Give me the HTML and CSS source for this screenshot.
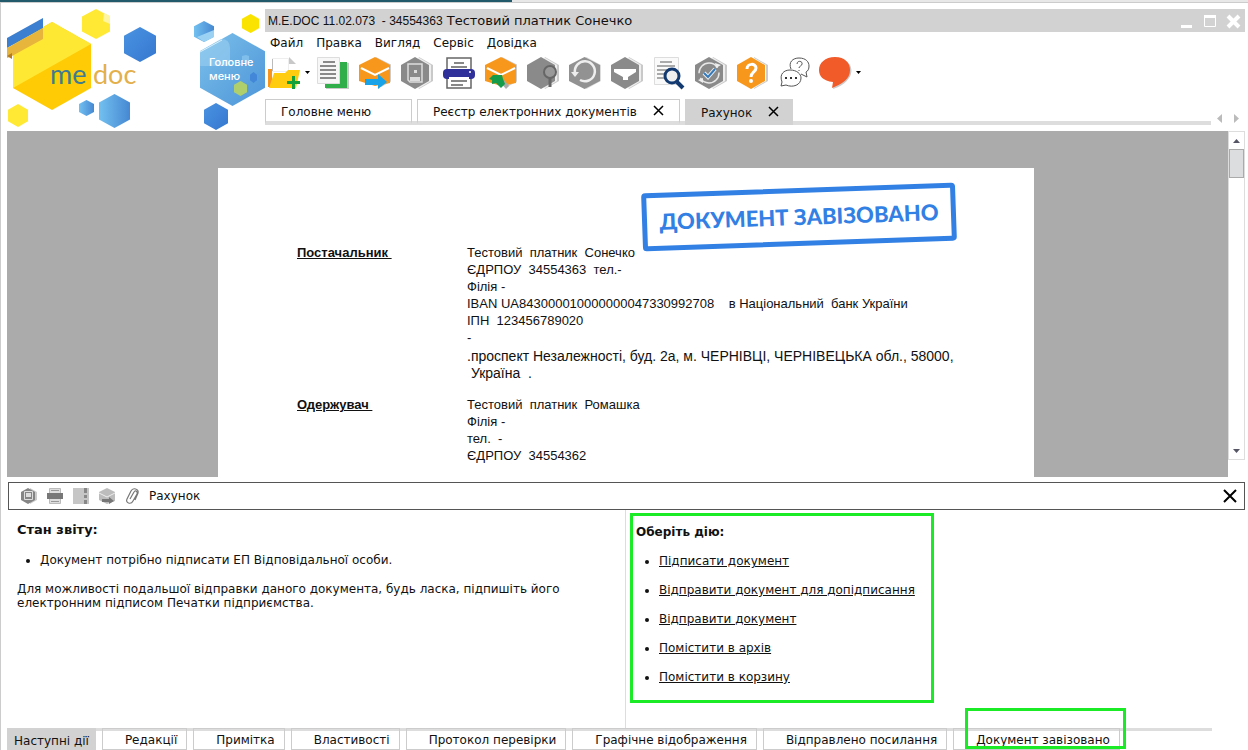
FILE: index.html
```
<!DOCTYPE html>
<html lang="uk">
<head>
<meta charset="utf-8">
<title>M.E.DOC</title>
<link rel="stylesheet" href="styles.css">
</head>
<body>
<svg class="defs" aria-hidden="true">
  <defs>
    <linearGradient id="blue" x1="0" y1="0" x2="1" y2="1"><stop offset="0" stop-color="#4a93e2"/><stop offset="1" stop-color="#3577cf"/></linearGradient>
    <linearGradient id="sky" x1="0" y1="0" x2="1" y2="0"><stop offset="0" stop-color="#72c0f0"/><stop offset="1" stop-color="#4688d2"/></linearGradient>
    <linearGradient id="menu" x1="0" y1="0" x2="1" y2="1"><stop offset="0" stop-color="#7cc0ea"/><stop offset="1" stop-color="#4c95d9"/></linearGradient>
    <symbol id="hex" viewBox="0 0 100 100" preserveAspectRatio="none"><path d="M50 0 100 25V75L50 100 0 75V25z"/></symbol>
    <symbol id="greyhex" viewBox="0 0 32 32"><path fill="#c9c9c9" d="M18 0 32 8V24L18 32z"/><path fill="#eee" d="M17 0 30 8V24L17 32z"/><path fill="#8a8a8a" d="M14 0 28 8V24L14 32 0 24V8z"/></symbol>
    <symbol id="envelope" viewBox="0 0 32 32"><path fill="#ccc" d="M17 0 33 8V24L22 30z"/><path fill="#f7981d" d="M16 0 31 8V26L16 29 0 24V8z"/><path fill="none" stroke="#fff" stroke-width="2" d="m2 11 14 7 14-7"/></symbol>
  </defs>
</svg>
<div class="strip"><i></i></div>
<div class="app">
<header class="header">
  <svg class="brand" viewBox="0 9 265 122" role="img" aria-label="me doc">
    <use href="#hex" x="13" y="22" width="78" height="88" fill="#ffcb05"/>
    <path fill="#ffe833" d="M52 22 91 44 13 88V44z"/>
    <path fill="#3c7fd0" d="m7 38 36-20v10L7 48z"/><path fill="#e7b53b" d="m7 48 36-20v11L12 56 7 58z"/><path fill="#b47b25" d="m7 56 5-3v6z"/>
    <use href="#hex" x="82" y="9" width="28" height="30" fill="#ffe935"/><path fill="#fff4a0" d="m104 13 6 3v8l-7-3z"/>
    <use href="#hex" x="124" y="27" width="32" height="35" fill="url(#blue)"/>
    <use href="#hex" x="79" y="100" width="15" height="16" fill="url(#sky)"/>
    <use href="#hex" x="99" y="94" width="31" height="34" fill="url(#sky)"/>
    <use href="#hex" x="8" y="104" width="20" height="23" fill="#ffe935"/>
    <use href="#hex" x="194" y="21" width="20" height="21" fill="url(#sky)"/><path fill="#9bd2f3" d="m197 37 17-7v7l-10 5z"/>
    <use href="#hex" x="242" y="14" width="17" height="19" fill="#fbe300"/>
    <use href="#hex" x="200" y="33" width="65" height="73" fill="url(#menu)"/>
    <path fill="#96cdef" opacity=".65" d="M200 51 221 39q9 0 9 9v18h-30z"/><path fill="none" stroke="#d9f0fb" d="m200 52 22-12"/>
    <path fill="#80bfec" d="m246 55 3 1v5l-3 2-4-2v-5z"/>
    <use href="#hex" x="250" y="72" width="7" height="11" fill="#4287d8"/>
    <use href="#hex" x="234" y="81" width="13" height="15" fill="#afcf6c"/>
    <use href="#hex" x="204" y="103" width="24" height="27" fill="url(#blue)"/>
    <text class="me" x="50" y="84">me</text><text class="doc" x="93" y="84">doc</text>
    <text class="mm" x="209" y="66">Головне</text><text class="mm" x="209" y="80">меню</text>
  </svg>
  <div class="top">
    <div class="titlebar">
      <h1><span class="latin">M.E.DOC 11.02.073&nbsp; - 34554363</span> Тестовий платник Сонечко</h1>
      <div class="winbtns">
        <button aria-label="Згорнути"><svg width="12" height="16"><path fill="#fff" d="M0 12h11v3H0z"/></svg></button>
        <button aria-label="Розгорнути"><svg width="12" height="14"><path fill="none" stroke="#fff" d="M.5 1.5h11v11H.5z"/><path fill="#fff" d="M0 1h12v3H0z"/></svg></button>
        <button aria-label="Закрити"><svg width="13" height="14"><path stroke="#fff" stroke-width="4" d="m1 2 11 11M12 2 1 13"/></svg></button>
      </div>
    </div>
    <nav class="menu"><button>Файл</button><button>Правка</button><button>Вигляд</button><button>Сервіс</button><button>Довідка</button></nav>
    <div class="toolbar">
      <button aria-label="Створити"><svg width="32" height="32"><path fill="#fff" stroke="#eee" d="M4.500 1.500h16v13h-16z"/><path stroke="#bbb" d="M4.500 2v12"/><path fill="#c8c8c8" d="m21 0 7 7h-7z"/><path fill="#f7941e" d="M0 12h4v18H0z"/><path fill="#ffcc10" d="M6 16h11l3-3h12l-4 18H1z"/><path fill="#15a038" d="M24 19h3v5h5v3h-5v5h-3v-5h-5v-3h5z"/></svg></button>
      <button class="caret" aria-label="Ще"><svg width="7" height="4"><path d="M1 0h5L3.500 3z"/></svg></button>
      <button aria-label="Документи"><svg width="32" height="32"><path fill="#c9c9c9" d="M9 6h23v26H9z"/><path fill="#2fae49" d="M8 5h22v26H8z"/><path fill="#f7f7f7" stroke="#ddd" d="M.5.500h22v26H.5z"/><path stroke="#8a8a8a" stroke-width="2" d="M6 5h12M3 9h16M3 13h16M3 17h16M3 21h16"/></svg></button>
      <button aria-label="Відправити"><svg width="32" height="32"><use href="#envelope" width="32" height="32"/><path fill="#18a3e8" d="M6 22h13v-5l9 8-9 7v-4H6z"/></svg></button>
      <button aria-label="Зберегти"><svg width="32" height="32"><use href="#greyhex" width="32" height="32"/><path fill="none" stroke="#ddd" stroke-width="1.500" d="M7 7h14v18H9l-2-2z"/><path fill="#ddd" d="M9 20h10v4H9zM13 13h3v3h-3z"/></svg></button>
      <button aria-label="Друк"><svg width="32" height="32"><path fill="#fff" stroke="#666" stroke-width="1.500" d="M4 1h24v30H4z"/><path stroke="#888" stroke-width="2" d="M11 6h10M8 10h16M8 24h16M8 28h12"/><rect y="12" width="32" height="10" rx="4" fill="#30309a"/><path fill="#fff" d="M6 20h20v3H6z"/><circle cx="27" cy="15" r="1" fill="#fff"/></svg></button>
      <button aria-label="Отримати"><svg width="32" height="32"><use href="#envelope" width="32" height="32"/><path fill="#aaa" d="m16 26 5 6 3-3-5-6z"/><path fill="#139c49" d="m8 18 9 0 1 4 2 5-4 4-5-5-4 1 0-4-3-1z"/></svg></button>
      <button aria-label="Перегляд"><svg width="32" height="32"><use href="#greyhex" width="32" height="32"/><circle cx="23" cy="15" r="6" fill="#999" stroke="#666" stroke-width="2"/><path stroke="#666" stroke-width="3" d="M23 21v9"/></svg></button>
      <button aria-label="Оновити"><svg width="32" height="32"><use href="#hex" width="29" height="32" x="3" fill="#ddd"/><use href="#hex" width="31" height="32" fill="#929292"/><path fill="none" stroke="#eee" stroke-width="2.500" d="M6 16a10 10 0 1 1 5 7"/><path fill="#eee" d="M2 15h8l-4 5z"/></svg></button>
      <button aria-label="Фільтр"><svg width="32" height="32"><use href="#greyhex" width="32" height="32"/><path fill="#fff" d="M3 12h22v3l-8 5v3h-5v-3l-9-5z"/></svg></button>
      <button aria-label="Пошук у документі"><svg width="32" height="32"><path fill="#fafafa" stroke="#ddd" d="M1.500.500h24v27h-24z"/><path stroke="#aaa" stroke-width="2" d="M7 5h12M4 9h18M4 13h12M4 17h9M4 21h9"/><circle cx="19" cy="19" r="7" fill="#eee" stroke="#123a70" stroke-width="3"/><path stroke="#123a70" stroke-width="4" d="m24 25 6 6"/></svg></button>
      <button aria-label="Перевірити"><svg width="32" height="32"><use href="#greyhex" width="32" height="32"/><circle cx="14" cy="16" r="10" fill="none" stroke="#e8e8e8" stroke-width="1.500" stroke-dasharray="26 5"/><path fill="#eee" d="m20 6 6 2-5 3zM3 23l5-2v5z"/><path fill="none" stroke="#eee" stroke-width="4" d="m9 16 4 4 7-8"/><path fill="none" stroke="#357bbb" stroke-width="2" d="m9 16 4 4 7-8"/></svg></button>
      <button aria-label="Довідка"><svg width="32" height="32"><path fill="#ccc" d="m17 0 14 8v16l-14 8z"/><path fill="#fff" d="m15 0 14 8v16l-14 8z"/><path fill="#f7981d" d="m14 0 14 8v16l-14 8L0 24V8z"/><path fill="none" stroke="#fff" stroke-width="3" d="M10 12c0-6 9-6 9-1 0 4-5 4-5 9"/><circle cx="14" cy="24" r="2" fill="#fff"/></svg></button>
      <button aria-label="Чат"><svg width="32" height="32" fill="#fff" stroke="#555"><path d="M12 12C9 5 14 1 20 1c7 0 10 4 10 8 0 3-1 5-3 6l1 5-6-3"/><path d="M2 29l1-4c-3-8 2-12 8-12 7 0 11 4 11 8 0 7-8 10-15 7z"/><path fill="none" d="M18 7c0-4 6-3 5 0 0 2-3 2-3 4m0 2v1"/><path stroke="none" fill="#333" d="M6 20h2v2H6zm5 0h2v2h-2zm5 0h2v2h-2z"/></svg></button>
      <button aria-label="Повідомлення"><svg width="32" height="32"><path fill="#ccc" d="M15 1C37 3 35 25 12 32z"/><path fill="#f15a29" d="M14 0C24 0 29 6 29 13c0 10-9 14-18 18l1-6C2 24-2 19-2 13-2 6 4 0 14 0z"/></svg></button>
      <button class="caret" aria-label="Ще"><svg width="7" height="4"><path d="M-1 0h5L1.500 3z"/></svg></button>
    </div>
    <div class="tabrow">
      <nav class="tabs">
        <button class="tab wide">Головне меню</button>
        <button class="tab">Реєстр електронних документів <svg width="9" height="9"><path stroke="#000" stroke-width="1.500" d="m0 0 9 9M9 0 0 9"/></svg></button>
        <button class="tab active">Рахунок <svg width="9" height="9"><path stroke="#000" stroke-width="1.500" d="m0 0 9 9M9 0 0 9"/></svg></button>
      </nav>
      <div class="arrows"><button aria-label="Ліворуч"><svg width="5" height="9"><path fill="#bbb" d="M5 0v9L0 4.500z"/></svg></button><button aria-label="Праворуч"><svg width="5" height="9"><path fill="#bbb" d="M0 0v9l5-4.500z"/></svg></button></div>
    </div>
  </div>
</header>

<main class="viewer">
  <div class="canvas">
    <article class="page">
      <div class="stamp">ДОКУМЕНТ ЗАВІЗОВАНО</div>
      <section class="party">
        <h2>Постачальник&nbsp;</h2>
        <div>
          <p>Тестовий&nbsp; платник&nbsp; Сонечко</p><p>ЄДРПОУ&nbsp; 34554363&nbsp; тел.-</p><p>Філія -</p>
          <p>IBAN UA843000010000000047330992708&nbsp; &nbsp; в Національний&nbsp; банк України</p>
          <p>ІПН&nbsp; 123456789020</p><p>-</p>
          <p class="addr">.проспект Незалежності, буд. 2а, м. ЧЕРНІВЦІ, ЧЕРНІВЕЦЬКА обл., 58000,<br>&nbsp;Україна&nbsp; .</p>
        </div>
      </section>
      <section class="party">
        <h2>Одержувач&nbsp;</h2>
        <div><p>Тестовий&nbsp; платник&nbsp; Ромашка</p><p>Філія -</p><p>тел.&nbsp; -</p><p>ЄДРПОУ&nbsp; 34554362</p></div>
      </section>
    </article>
  </div>
  <div class="scroll">
    <button aria-label="Вгору"><svg width="7" height="4"><path fill="#556" d="M0 4h7L3.500 0z"/></svg></button>
    <div class="thumb"></div>
    <button class="down" aria-label="Вниз"><svg width="7" height="4"><path fill="#556" d="M0 0h7L3.500 4z"/></svg></button>
  </div>
</main>

<div class="infobar">
  <button aria-label="Зберегти"><svg width="16" height="16"><path fill="#ccc" d="m9 0 7 4v8l-7 4z"/><path fill="#858585" d="m7 0 7 4v8l-7 4-7-4V4z"/><path fill="none" stroke="#ddd" d="M3.500 3.500h8v8h-8z"/><path fill="#ddd" d="M5 5h5v4H5z"/></svg></button>
  <button aria-label="Друк"><svg width="16" height="16"><path fill="#ddd" stroke="#bbb" d="M2.500.500h11v15h-11z"/><path fill="#777" d="M0 5h16v6H0z"/><path stroke="#999" d="M4 2.500h8M4 13.500h8"/></svg></button>
  <button aria-label="Журнал"><svg width="16" height="16"><path fill="#c6c6c6" d="M0 0h16v16H0z"/><path fill="#888" d="M11 0h3v5h-3zm0 7h3v3h-3zm0 5h3v4h-3z"/></svg></button>
  <button aria-label="Відправити"><svg width="16" height="16"><path fill="#bcbcbc" d="m8 0 8 4v9l-8 3-8-4V4z"/><path fill="none" stroke="#eee" d="m0 5 8 4 8-4"/><path fill="#777" d="M3 11h7V9l5 4-5 3v-2H3z"/></svg></button>
  <button aria-label="Вкладення"><svg width="14" height="16" fill="none" stroke="#777" stroke-width="1.200"><path d="m5 11 4-7c1-2 4-1 3 2L8 13c-2 4-8 2-6-2L6 3c2-4 8-2 7 2l-3 7"/></svg></button>
  <span>Рахунок</span>
  <button class="close" aria-label="Закрити"><svg width="12" height="12"><path stroke="#000" stroke-width="2" d="m0 0 12 12M12 0 0 12"/></svg></button>
</div>

<div class="panels">
  <section class="state">
    <h2>Стан звіту:</h2>
    <ul><li>Документ потрібно підписати ЕП Відповідальної особи.</li></ul>
    <p>Для можливості подальшої відправки даного документа, будь ласка, підпишіть його<br>електронним підписом Печатки підприємства.</p>
  </section>
  <section class="actions">
    <div class="mark">
      <h2>Оберіть дію:</h2>
      <ul>
        <li><a href="#">Підписати документ</a></li>
        <li><a href="#">Відправити документ для допідписання</a></li>
        <li><a href="#">Відправити документ</a></li>
        <li><a href="#">Помістити в архів</a></li>
        <li><a href="#">Помістити в корзину</a></li>
      </ul>
    </div>
  </section>
</div>

<nav class="bottom">
  <button class="active">Наступні дії</button><button>Редакції</button><button>Примітка</button><button>Властивості</button><button>Протокол перевірки</button><button>Графічне відображення</button><button>Відправлено посилання</button><button class="last">Документ завізовано<span class="frame"></span></button>
</nav>
</div>
</body>
</html>
```
FILE: styles.css
```
* { box-sizing: border-box; }
body {
  margin: 0;
  min-height: 100vh;
  display: flex;
  flex-direction: column;
  background: #fff;
  color: #111;
  font: 12px/14px "DejaVu Sans", Verdana, sans-serif;
}
h1, h2, p, ul { margin: 0; font-size: inherit; }
button { margin: 0; padding: 0; border: 0; background: none; color: inherit; font: inherit; }
svg { display: block; overflow: visible; }
.defs { position: absolute; width: 0; height: 0; }
.strip { height: 3px; background: #e8e8e8; border-bottom: 1px solid #ccc; flex: none; }
.strip i { display: block; width: 41%; height: 2px; background: #22596b; }
.app { flex: 1; display: flex; flex-direction: column; border-left: 1px solid #ccc; }

.header { display: flex; height: 122px; margin-top: 6px; }
.brand { width: 265px; height: 122px; margin-left: -1px; flex: none; }
.brand .me, .brand .doc { font: 27px Lato, sans-serif; }
.brand .me { fill: #3d7b93; }
.brand .doc { fill: #e3b04b; }
.brand .mm { font: 500 11px Inter, sans-serif; fill: #fff; }
.top { flex: 1; min-width: 0; }
.titlebar { display: flex; justify-content: space-between; height: 23px; margin-right: 3px; padding: 0 5px 0 3px; background: #d2d2d2; align-items: center; }
.titlebar h1 { font: 13px/20px "DejaVu Sans", Verdana, sans-serif; white-space: nowrap; }
.titlebar .latin { font-size: 12px; font-family: "Liberation Sans", Arial, sans-serif; }
.winbtns { display: flex; gap: 11px; }
.menu { display: flex; gap: 13px; height: 22px; padding-left: 5px; align-items: center; }
.toolbar { display: flex; gap: 10px; height: 35px; margin-top: 3px; padding-left: 3px; align-items: flex-start; }
.caret { margin: 14px -4px 0 -6px; }

.tabrow { display: flex; margin-top: 7px; }
.tabs { display: flex; flex: 1; gap: 5px; height: 26px; align-items: flex-start; border-bottom: 1px solid #ddd; box-shadow: inset 0 -3px #ddd; }
.tab { display: flex; align-items: center; gap: 17px; height: 25px; padding: 3px 16px 0 15px; border: 1px solid #ccc; border-bottom: 3px solid #ddd; background: #fff; }
.tab svg { margin-bottom: 3px; }
.tab.wide { width: 147px; }
.tab.active { height: 26px; padding-right: 14px; background: #d2d2d2; border-color: #d2d2d2; }
.arrows { display: flex; gap: 12px; width: 37px; padding: 12px 0 0 6px; }

.viewer { display: flex; flex: 1; margin-left: 6px; }
.canvas { flex: 1; padding: 37px 194px 0 211px; background: #ababab; overflow: hidden; }
.page { position: relative; height: 309px; padding: 76px 0 0 79px; background: #fff; font: 13px/17px "Liberation Sans", Arial, sans-serif; }
.party { display: grid; grid-template-columns: 170px 1fr; margin-bottom: 14px; white-space: nowrap; }
.party h2 { font-weight: 700; text-decoration: underline; }
.addr { margin-top: 2px; font-size: 14px; }
.stamp { position: absolute; left: 424px; top: 20px; width: 314px; height: 58px; border: 5px solid #3280e4; border-radius: 4px; color: #3280e4; font: 900 22px/48px Lato, sans-serif; text-align: center; white-space: nowrap; transform: rotate(-2deg); }
.scroll { display: flex; flex-direction: column; align-items: center; width: 17px; margin: 0 3px 17px 0; border: 1px solid #ddd; }
.scroll button { height: 17px; }
.thumb { width: 15px; height: 29px; border: 1px solid #aaa; background: #dcddde; }
.scroll .down { margin-top: auto; }

.infobar { display: flex; align-items: center; gap: 10px; height: 28px; margin: 5px 3px 0 7px; padding: 0 8px 0 12px; border: 1px solid #555; }
.infobar .close { margin-left: auto; }
.panels { display: grid; grid-template-columns: 624px 1fr; min-height: 218px; }
.state { padding: 13px 16px; }
.panels h2 { font-weight: 700; }
.state h2 { font-size: 13px; }
.state ul { margin: 16px 0 15px; padding-left: 23px; }
.actions { padding: 3px 4px; border-left: 1px solid #ddd; }
.mark { width: 304px; height: 190px; padding: 9px 3px; border: 3px solid #1bea26; }
.actions ul { display: grid; gap: 15px; margin-top: 15px; padding-left: 23px; }
.actions a { color: inherit; }

.bottom { display: flex; gap: 6px; height: 22px; margin: 0 36px 0 6px; box-shadow: inset 0 3px #ddd; }
.bottom button { height: 22px; padding: 1px 9px 0 22px; border: 1px solid #ccc; box-shadow: inset 0 2px #ddd; white-space: nowrap; }
.bottom .active { padding: 3px 7px 0; border: 0; background: #d2d2d2; box-shadow: none; }
.bottom .last { position: relative; }
.frame { position: absolute; inset: -21px -7px 0 11px; border: 3px solid #1bea26; }
```
